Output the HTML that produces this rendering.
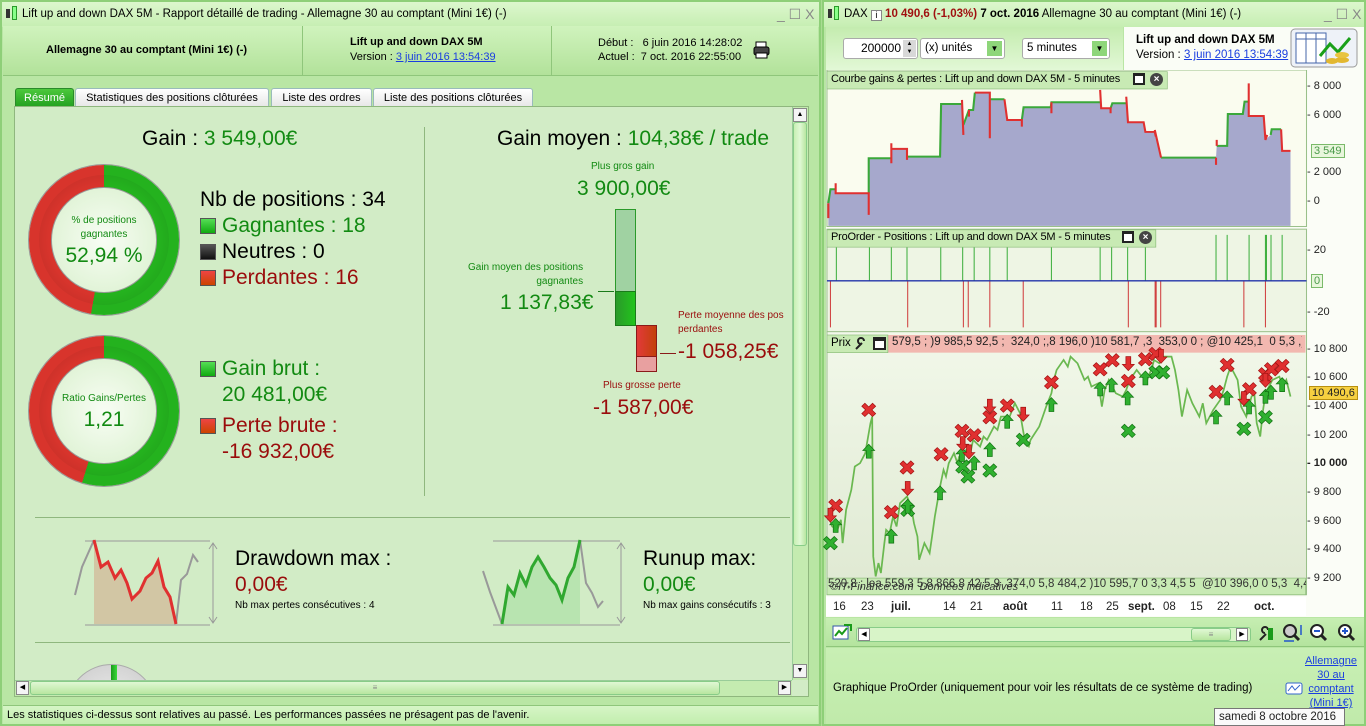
<!DOCTYPE html>
<html><head><meta charset="utf-8">
<style>
*{margin:0;padding:0;box-sizing:border-box}
body{width:1366px;height:726px;overflow:hidden;background:#a9dc92;font-family:"Liberation Sans",Arial,sans-serif;position:relative;color:#000}
.a{position:absolute}
.t{position:absolute;white-space:nowrap}
.g{color:#128a12}.r{color:#9a0c0c}
.title{background:linear-gradient(#dcf7cd,#c6eeb2);height:25px;font-size:12px;line-height:25px}
.sq{position:absolute;width:16px;height:16px;border:1px solid #555}
.ax{position:absolute;font-size:11px;color:#222;white-space:nowrap}
.tab{position:absolute;top:88px;height:19px;font-size:11px;line-height:18px;text-align:center;background:linear-gradient(#fff,#e6e6e6);border:1px solid #9bb;border-bottom:none;border-radius:3px 3px 0 0}
a{color:#1a3ee0;text-decoration:underline}
</style></head><body>

<!-- LEFT WINDOW -->
<div class="a" style="left:0;top:0;width:821px;height:726px;background:#b9e6a4;border:2px solid #8ecf78"></div>
<div class="a title" style="left:2px;top:2px;width:817px;">
 <span class="a" style="left:4px;top:7px;width:4px;height:9px;background:#333"></span>
 <span class="a" style="left:10px;top:4px;width:5px;height:14px;border:1px solid #2a9a2a;background:#8f8"></span>
 <span class="t" style="left:20px;top:0;font-size:11.5px">Lift up and down DAX 5M - Rapport détaillé de trading - Allemagne 30 au comptant (Mini 1€) (-)</span>
 <span class="t" style="left:775px;top:0;color:#888;font-size:14px">_ ☐ X</span>
</div>
<div class="a" style="left:3px;top:26px;width:815px;height:50px;background:linear-gradient(#d0f3bd,#b2e29a);border-bottom:1px solid #8fc67b"></div>
<div class="a" style="left:302px;top:26px;width:1px;height:50px;background:#8fc67b"></div>
<div class="a" style="left:551px;top:26px;width:1px;height:50px;background:#8fc67b"></div>
<div class="t" style="left:46px;top:44px;font-size:11px;font-weight:bold">Allemagne 30 au comptant (Mini 1€) (-)</div>
<div class="t" style="left:350px;top:36px;font-size:11px;font-weight:bold">Lift up and down DAX 5M</div>
<div class="t" style="left:350px;top:51px;font-size:11px">Version : <a>3 juin 2016 13:54:39</a></div>
<div class="t" style="left:598px;top:37px;font-size:11px">Début :&nbsp;&nbsp; 6 juin 2016 14:28:02</div>
<div class="t" style="left:598px;top:51px;font-size:11px">Actuel :&nbsp; 7 oct. 2016 22:55:00</div>
<svg class="a" style="left:752px;top:40px" width="20" height="20"><rect x="4" y="2" width="10" height="6" fill="#fff" stroke="#000"/><rect x="2" y="7" width="15" height="8" rx="2" fill="#444" stroke="#000"/><rect x="4" y="13" width="11" height="5" fill="#fff" stroke="#000"/></svg>

<div class="tab" style="left:15px;width:59px;background:linear-gradient(#4cc83c,#22a020);color:#fff;border-color:#2a8a2a">Résumé</div>
<div class="tab" style="left:75px;width:194px">Statistiques des positions clôturées</div>
<div class="tab" style="left:271px;width:101px">Liste des ordres</div>
<div class="tab" style="left:373px;width:160px">Liste des positions clôturées</div>

<div class="a" style="left:14px;top:106px;width:795px;height:591px;background:#d2ecc6;border:1px solid #8fb77e"></div>
<div class="a" style="left:792px;top:107px;width:16px;height:573px;background:#c4ebb0;border-left:1px solid #9c9"></div>
<div class="a" style="left:793px;top:108px;width:14px;height:14px;background:#f4f4f4;border:1px solid #888;font-size:7px;text-align:center;line-height:12px">▲</div>
<div class="a" style="left:793px;top:122px;width:14px;height:424px;background:linear-gradient(90deg,#c8f0b4,#e0f8d4,#b8e6a0);border:1px solid #8c8;border-radius:3px"></div>
<div class="a" style="left:793px;top:664px;width:14px;height:14px;background:#f4f4f4;border:1px solid #888;font-size:7px;text-align:center;line-height:12px">▼</div>
<div class="a" style="left:15px;top:680px;width:777px;height:16px;background:#c4ebb0;border-top:1px solid #9c9"></div>
<div class="a" style="left:16px;top:681px;width:13px;height:14px;background:#f4f4f4;border:1px solid #888;font-size:7px;line-height:12px;text-align:center">◀</div>
<div class="a" style="left:30px;top:681px;width:690px;height:14px;background:linear-gradient(#e0f8d4,#b8e6a0);border:1px solid #8c8;border-radius:3px;font-size:8px;text-align:center;color:#888;line-height:12px">≡</div>
<div class="a" style="left:778px;top:681px;width:13px;height:14px;background:#f4f4f4;border:1px solid #888;font-size:7px;line-height:12px;text-align:center">▶</div>
<div class="a" style="left:3px;top:705px;width:815px;height:19px;background:linear-gradient(#d6f5c6,#c2eeae);border-top:1px solid #8fc67b"></div>
<div class="t" style="left:7px;top:709px;font-size:11px">Les statistiques ci-dessus sont relatives au passé. Les performances passées ne présagent pas de l'avenir.</div>

<div class="t" style="left:142px;top:127px;font-size:21px">Gain : <span class="g">3 549,00€</span></div>
<div class="a" style="left:424px;top:127px;width:1px;height:369px;background:#8fb77e"></div>

<div class="a" style="left:29px;top:165px;width:150px;height:150px;border-radius:50%;background:conic-gradient(#24b21e 0deg 190deg,#d8342c 190deg 360deg);box-shadow:0 0 0 1px #999"></div>
<div class="a" style="left:39px;top:175px;width:130px;height:130px;border-radius:50%;background:radial-gradient(circle,transparent 60%,rgba(0,0,0,.18) 100%)"></div>
<div class="a" style="left:51px;top:187px;width:106px;height:106px;border-radius:50%;background:radial-gradient(circle,#f8fdf4,#d8f0cc);border:1px solid #999"></div>
<div class="t g" style="left:51px;top:214px;width:106px;text-align:center;font-size:10px;line-height:14px;white-space:normal">% de positions gagnantes</div>
<div class="t g" style="left:51px;top:244px;width:106px;text-align:center;font-size:21px">52,94 %</div>

<div class="a" style="left:29px;top:336px;width:150px;height:150px;border-radius:50%;background:conic-gradient(#24b21e 0deg 197deg,#d8342c 197deg 360deg);box-shadow:0 0 0 1px #999"></div>
<div class="a" style="left:39px;top:346px;width:130px;height:130px;border-radius:50%;background:radial-gradient(circle,transparent 60%,rgba(0,0,0,.18) 100%)"></div>
<div class="a" style="left:51px;top:358px;width:106px;height:106px;border-radius:50%;background:radial-gradient(circle,#f8fdf4,#d8f0cc);border:1px solid #999"></div>
<div class="t g" style="left:51px;top:393px;width:106px;text-align:center;font-size:10px">Ratio Gains/Pertes</div>
<div class="t g" style="left:51px;top:408px;width:106px;text-align:center;font-size:21px">1,21</div>

<div class="t" style="left:200px;top:188px;font-size:21px">Nb de positions : 34</div>
<div class="sq" style="left:200px;top:218px;background:linear-gradient(#5d5,#1a1)"></div><div class="t g" style="left:222px;top:214px;font-size:21px">Gagnantes : 18</div>
<div class="sq" style="left:200px;top:244px;background:linear-gradient(#555,#111)"></div><div class="t" style="left:222px;top:240px;font-size:21px">Neutres : 0</div>
<div class="sq" style="left:200px;top:270px;background:linear-gradient(#e44,#c40)"></div><div class="t r" style="left:222px;top:266px;font-size:21px">Perdantes : 16</div>

<div class="sq" style="left:200px;top:361px;background:linear-gradient(#5d5,#1a1)"></div><div class="t g" style="left:222px;top:357px;font-size:21px">Gain brut :</div>
<div class="t g" style="left:222px;top:383px;font-size:21px">20 481,00€</div>
<div class="sq" style="left:200px;top:418px;background:linear-gradient(#e44,#c40)"></div><div class="t r" style="left:222px;top:414px;font-size:21px">Perte brute :</div>
<div class="t r" style="left:222px;top:440px;font-size:21px">-16 932,00€</div>

<div class="t" style="left:497px;top:127px;font-size:21px">Gain moyen : <span class="g">104,38€ / trade</span></div>
<div class="t g" style="left:591px;top:161px;font-size:10px">Plus gros gain</div>
<div class="t g" style="left:577px;top:177px;font-size:21px">3 900,00€</div>
<div class="a" style="left:615px;top:209px;width:21px;height:83px;background:#a0d2a2;border:1px solid #2a9a2a"></div>
<div class="a" style="left:615px;top:291px;width:21px;height:35px;background:linear-gradient(90deg,#2a9a2a,#22c41c);border:1px solid #1a7a1a"></div>
<div class="a" style="left:636px;top:325px;width:21px;height:32px;background:linear-gradient(90deg,#e23a3a,#c2400a);border:1px solid #8a1a1a"></div>
<div class="a" style="left:636px;top:356px;width:21px;height:16px;background:#e8a0a0;border:1px solid #8a1a1a"></div>
<div class="t g" style="left:468px;top:261px;font-size:10px;text-align:right;line-height:14px">Gain moyen des positions<br>gagnantes</div>
<div class="a" style="left:598px;top:291px;width:16px;height:1px;background:#1a7a1a"></div>
<div class="t g" style="left:500px;top:291px;font-size:21px">1 137,83€</div>
<div class="t r" style="left:678px;top:309px;font-size:10px;line-height:14px">Perte moyenne des pos<br>perdantes</div>
<div class="a" style="left:660px;top:353px;width:16px;height:1px;background:#8a1a1a"></div>
<div class="t r" style="left:678px;top:340px;font-size:21px">-1 058,25€</div>
<div class="t r" style="left:603px;top:380px;font-size:10px">Plus grosse perte</div>
<div class="t r" style="left:593px;top:396px;font-size:21px">-1 587,00€</div>

<div class="a" style="left:35px;top:517px;width:755px;height:1px;background:#8fb77e"></div>
<div class="a" style="left:35px;top:642px;width:755px;height:1px;background:#8fb77e"></div>

<svg class="a" style="left:70px;top:535px" width="150" height="95">
 <line x1="15" y1="6" x2="140" y2="6" stroke="#999"/><line x1="15" y1="90" x2="140" y2="90" stroke="#999"/>
 <line x1="143" y1="8" x2="143" y2="88" stroke="#999"/><path d="M139 14l4-6 4 6M139 82l4 6 4-6" fill="none" stroke="#999"/>
 <path d="M24 5 L31 32 L38 27 L45 43 L51 35 L57 48 L62 64 L70 56 L76 43 L82 38 L88 26 L94 52 L100 62 L106 89 L24 89Z" fill="#d2c6a4"/>
 <path d="M5 60 L12 32 L24 5" fill="none" stroke="#999" stroke-width="2"/>
 <path d="M106 89 L111 45 L117 39 L123 20 L128 27" fill="none" stroke="#999" stroke-width="2"/>
 <path d="M24 5 L31 32 L38 27 L45 43 L51 35 L57 48 L62 64 L70 56 L76 43 L82 38 L88 26 L94 52 L100 62 L106 89" fill="none" stroke="#e03030" stroke-width="3"/>
</svg>
<div class="t" style="left:235px;top:547px;font-size:21px">Drawdown max :</div>
<div class="t r" style="left:235px;top:573px;font-size:21px">0,00€</div>
<div class="t" style="left:235px;top:600px;font-size:10px">Nb max pertes consécutives : 4</div>

<svg class="a" style="left:480px;top:535px" width="150" height="95">
 <line x1="13" y1="6" x2="140" y2="6" stroke="#999"/><line x1="13" y1="90" x2="140" y2="90" stroke="#999"/>
 <line x1="141" y1="8" x2="141" y2="88" stroke="#999"/><path d="M137 14l4-6 4 6M137 82l4 6 4-6" fill="none" stroke="#999"/>
 <path d="M22 89 L28 52 L34 60 L40 38 L46 50 L52 32 L58 22 L64 32 L70 43 L76 50 L82 65 L88 43 L94 32 L100 5 L100 89Z" fill="#b8e4b0"/>
 <path d="M3 36 L10 57 L22 89" fill="none" stroke="#999" stroke-width="2"/>
 <path d="M100 5 L106 48 L112 58 L118 72 L123 66" fill="none" stroke="#999" stroke-width="2"/>
 <path d="M22 89 L28 52 L34 60 L40 38 L46 50 L52 32 L58 22 L64 32 L70 43 L76 50 L82 65 L88 43 L94 32 L100 5" fill="none" stroke="#30a830" stroke-width="3"/>
</svg>
<div class="t" style="left:643px;top:547px;font-size:21px">Runup max:</div>
<div class="t g" style="left:643px;top:573px;font-size:21px">0,00€</div>
<div class="t" style="left:643px;top:600px;font-size:10px">Nb max gains consécutifs : 3</div>

<div class="a" style="left:66px;top:664px;width:91px;height:16px;overflow:hidden"><div style="width:91px;height:91px;border-radius:50%;background:radial-gradient(circle,#f0f0f0,#c8c8c8);border:1px solid #aaa"></div></div>
<div class="a" style="left:111px;top:665px;width:6px;height:15px;background:linear-gradient(90deg,#1a9a1a,#3ada3a)"></div>

<!-- RIGHT WINDOW -->
<div class="a" style="left:822px;top:0;width:544px;height:726px;background:#b9e6a4;border:2px solid #8ecf78"></div>
<div class="a title" style="left:824px;top:2px;width:540px;">
 <span class="a" style="left:4px;top:7px;width:4px;height:9px;background:#333"></span>
 <span class="a" style="left:10px;top:4px;width:5px;height:14px;border:1px solid #2a9a2a;background:#8f8"></span>
 <span class="t" style="left:20px;top:0;font-size:11.5px">DAX <span style="display:inline-block;width:11px;height:11px;border:1px solid #888;background:#fff;font-size:9px;line-height:9px;text-align:center;vertical-align:-1px">i</span> <b style="color:#a01010">10 490,6 (-1,03%)</b> <b>7 oct. 2016</b> Allemagne 30 au comptant (Mini 1€) (-)</span>
 <span class="t" style="left:500px;top:0;color:#888;font-size:14px">_ ☐ X</span>
</div>
<div class="a" style="left:826px;top:27px;width:297px;height:43px;background:linear-gradient(#c4ecaf,#e2f8d6)"></div>
<div class="a" style="left:1124px;top:27px;width:240px;height:43px;background:#fafdf6"></div>
<div class="a" style="left:843px;top:38px;width:75px;height:21px;background:#fff;border:1px solid #aaa;border-radius:3px;font-size:12px;line-height:19px;text-align:right;padding-right:16px">200000</div>
<div class="a" style="left:903px;top:40px;width:13px;height:17px;background:#d8d8d8;font-size:6px;line-height:8px;text-align:center">▲<br>▼</div>
<div class="a" style="left:920px;top:38px;width:85px;height:21px;background:#fff;border:1px solid #aaa;border-radius:3px;font-size:11.5px;line-height:19px;padding-left:4px">(x) unités</div>
<div class="a" style="left:987px;top:41px;width:15px;height:15px;background:#8ed67a;font-size:8px;line-height:15px;text-align:center">▼</div>
<div class="a" style="left:1022px;top:38px;width:88px;height:21px;background:#fff;border:1px solid #aaa;border-radius:3px;font-size:11.5px;line-height:19px;padding-left:4px">5 minutes</div>
<div class="a" style="left:1092px;top:41px;width:15px;height:15px;background:#8ed67a;font-size:8px;line-height:15px;text-align:center">▼</div>
<div class="t" style="left:1136px;top:34px;font-size:11.5px;font-weight:bold">Lift up and down DAX 5M</div>
<div class="t" style="left:1136px;top:49px;font-size:11.5px">Version : <a>3 juin 2016 13:54:39</a></div>
<svg class="a" style="left:1290px;top:28px" width="68" height="40"><rect x="1" y="1" width="66" height="38" rx="4" fill="#eef2f8" stroke="#999"/><rect x="6" y="5" width="30" height="30" fill="#fff" stroke="#4466aa"/><path d="M6 11h30M16 5v30M26 5v30" stroke="#4466aa"/><path d="M30 28l10-12 8 8 12-14" fill="none" stroke="#1aa01a" stroke-width="3"/><ellipse cx="52" cy="32" rx="7" ry="3" fill="#e2b830"/><ellipse cx="52" cy="27" rx="7" ry="3" fill="#e8c440"/><ellipse cx="42" cy="33" rx="6" ry="3" fill="#e2b830"/></svg>

<div class="a" style="left:826px;top:70px;width:538px;height:547px;background:#fbfdf7"></div>
<svg class="a" style="left:820px;top:70px" width="546" height="550">
 <g transform="scale(0.348,0.333)">
  <rect x="20" y="0" width="1378" height="470" fill="#fafcef" stroke="#9ac08a" stroke-width="3"/>
  <path d="M24 400 L30 358 L45 358 L45 370 L140 370 L140 265 L205 265 L205 237 L250 237 L250 260 L345 260 L348 102 L408 102 L412 165 L428 120 L440 120 L445 68 L488 68 L490 88 L530 88 L538 150 L580 150 L585 112 L663 112 L665 97 L805 97 L808 115 L835 115 L840 100 L880 100 L885 157 L930 157 L935 186 L962 186 L980 263 L1138 263 L1140 228 L1170 228 L1172 132 L1215 132 L1220 95 L1230 95 L1232 40 L1232 138 L1275 138 L1280 210 L1295 195 L1298 178 L1325 178 L1328 243 L1352 243 L1352 468 L24 468Z" fill="#a6a8cc"/>
  <path d="M24 400 L30 358 L45 358 M140 370 L140 265 L205 265 M250 260 L345 260 L348 102 L408 102 M412 165 L428 120 L440 120 L445 68 M490 88 L530 88 M580 150 L585 112 L663 112 L665 97 L805 97 M835 115 L840 100 L880 100 M980 263 L1138 263 M1140 228 L1170 228 L1172 132 L1215 132 L1220 95 L1230 95 M1295 195 L1298 178 L1325 178" fill="none" stroke="#3aa83a" stroke-width="6"/>
  <path d="M24 400 L24 445 M45 340 L45 370 L140 370 L140 435 M205 220 L205 280 M205 237 L250 237 L250 270 M408 90 L412 195 M428 120 L428 140 M445 68 L488 68 L488 205 M530 88 L538 150 L580 150 L580 170 M665 97 L665 130 M805 60 L808 115 L835 115 L835 130 M880 80 L885 157 L930 157 L935 186 L962 186 L965 200 M962 180 L980 263 M1138 263 L1138 285 M1140 210 L1140 228 M1232 40 L1232 138 L1275 138 L1280 210 L1285 195 M1325 178 L1328 243 L1352 243" fill="none" stroke="#e03030" stroke-width="6"/>
  <rect x="20" y="5" width="978" height="52" fill="#c8eab4" stroke="#8cbc7a" stroke-width="2"/>
  <rect x="20" y="478" width="1378" height="310" fill="#eef5e4" stroke="#9ac08a" stroke-width="3"/>
  <rect x="20" y="480" width="945" height="52" fill="#c8eab4" stroke="#8cbc7a" stroke-width="2"/>
  <path d="M47 533v100M142 533v100M205 533v100M250 533v100M347 533v100M410 533v100M443 533v100M488 533v100M538 533v100M665 533v100M805 533v100M838 533v100M884 533v100M935 533v100M1138 495v138M1170 495v138M1233 495v138M1280 495v138M1283 495v138M1296 495v138M1328 495v138" stroke="#40b040" stroke-width="3"/>
  <path d="M30 633v140M252 633v140M412 633v140M426 633v140M488 633v140M584 633v140M886 633v140M963 633v140M966 633v140M979 633v140M1218 633v140M1280 633v140" stroke="#d04040" stroke-width="3"/>
  <line x1="20" y1="633" x2="1398" y2="633" stroke="#2233aa" stroke-width="4"/>
 </g>
</svg>
<div class="t" style="left:831px;top:73px;font-size:11px;letter-spacing:-0.2px">Courbe gains &amp; pertes : Lift up and down DAX 5M - 5 minutes</div>
<div class="a" style="left:1133px;top:73px;width:12px;height:12px;border:2px solid #222;border-top-width:3px;background:#fff"></div>
<div class="a" style="left:1150px;top:73px;width:13px;height:13px;border-radius:50%;background:#444;color:#fff;font-size:10px;line-height:13px;text-align:center;font-weight:bold">×</div>
<div class="t" style="left:831px;top:231px;font-size:11px;letter-spacing:-0.2px">ProOrder - Positions : Lift up and down DAX 5M - 5 minutes</div>
<div class="a" style="left:1122px;top:231px;width:12px;height:12px;border:2px solid #222;border-top-width:3px;background:#fff"></div>
<div class="a" style="left:1139px;top:231px;width:13px;height:13px;border-radius:50%;background:#444;color:#fff;font-size:10px;line-height:13px;text-align:center;font-weight:bold">×</div>

<div class="ax" style="left:1307px;top:80px">- 8 000</div>
<div class="ax" style="left:1307px;top:109px">- 6 000</div>
<div class="ax" style="left:1307px;top:166px">- 2 000</div>
<div class="ax" style="left:1307px;top:195px">- 0</div>
<div class="ax" style="left:1311px;top:144px;background:#e8f6dc;border:1px solid #7aba6a;color:#4a9a4a;padding:0 2px">3 549</div>
<div class="ax" style="left:1307px;top:244px">- 20</div>
<div class="ax" style="left:1311px;top:274px;background:#e8f6dc;border:1px solid #7aba6a;color:#4a9a4a;padding:0 2px">0</div>
<div class="ax" style="left:1307px;top:306px">- -20</div>

<svg class="a" style="left:820px;top:330px" width="546" height="290">
 <defs>
  <linearGradient id="pg" x1="0" y1="0" x2="0" y2="1"><stop offset="0" stop-color="#f2f8ea"/><stop offset="1" stop-color="#dfe9d2"/></linearGradient>
  <path id="rx" d="M-20 -11 L-11 -20 L0 -9 L11 -20 L20 -11 L9 0 L20 11 L11 20 L0 9 L-11 20 L-20 11 L-9 0Z"/>
  <path id="up" d="M0 -22 L17 -3 L7 -3 L7 20 L-7 20 L-7 -3 L-17 -3Z"/>
 </defs>
 <g transform="scale(0.348,0.333)">
  <rect x="20" y="5" width="1378" height="790" fill="url(#pg)" stroke="#9ac08a" stroke-width="3"/>
  <rect x="195" y="15" width="1200" height="53" fill="#f2b8b0"/>
  <rect x="20" y="15" width="175" height="53" fill="#c8eab4" stroke="#8cbc7a" stroke-width="2"/>
  <rect x="20" y="745" width="1375" height="50" fill="#c8eab4" stroke="#8cbc7a" stroke-width="2"/>
  <polyline points="25,560 35,590 50,600 60,570 65,640 75,540 90,480 100,410 115,400 130,370 145,280 150,260 153,680 160,740 168,700 175,730 185,640 190,600 200,610 210,560 220,590 230,520 250,500 262,530 270,580 280,620 285,690 300,640 315,670 322,620 330,560 345,470 355,420 362,440 370,400 385,370 395,400 400,380 420,360 430,380 440,330 460,350 470,320 480,330 500,290 510,300 520,260 545,260 560,220 575,250 590,340 600,350 605,330 630,290 640,260 650,230 665,190 672,150 680,120 700,90 712,110 720,80 740,100 760,150 770,140 780,170 800,160 810,230 818,180 830,150 850,190 870,200 880,180 890,150 910,120 925,140 940,150 955,110 960,90 975,100 990,80 1010,80 1020,120 1030,180 1040,260 1055,180 1070,220 1080,240 1090,260 1100,220 1110,280 1130,240 1150,210 1160,180 1170,140 1180,110 1190,130 1200,150 1210,230 1225,260 1240,200 1248,190 1255,280 1265,320 1272,250 1280,190 1300,150 1320,140 1330,170 1340,150 1352,200" fill="none" stroke="#6ab850" stroke-width="5"/>
  <g fill="#e03030" stroke="#a01010" stroke-width="2">
   <use href="#rx" x="45" y="528"/><use href="#rx" x="140" y="240"/><use href="#rx" x="250" y="413"/><use href="#rx" x="205" y="547"/><use href="#rx" x="348" y="373"/><use href="#rx" x="408" y="303"/><use href="#rx" x="443" y="316"/><use href="#rx" x="488" y="262"/><use href="#rx" x="538" y="227"/><use href="#rx" x="665" y="157"/><use href="#rx" x="805" y="118"/><use href="#rx" x="840" y="91"/><use href="#rx" x="886" y="153"/><use href="#rx" x="935" y="88"/><use href="#rx" x="965" y="72"/><use href="#rx" x="1170" y="105"/><use href="#rx" x="1138" y="186"/><use href="#rx" x="1234" y="178"/><use href="#rx" x="1280" y="133"/><use href="#rx" x="1297" y="118"/><use href="#rx" x="1328" y="108"/>
  </g>
  <g fill="#30b030" stroke="#107010" stroke-width="2">
   <use href="#rx" x="30" y="640"/><use href="#rx" x="252" y="540"/><use href="#rx" x="410" y="410"/><use href="#rx" x="425" y="440"/><use href="#rx" x="488" y="422"/><use href="#rx" x="584" y="330"/><use href="#rx" x="886" y="303"/><use href="#rx" x="965" y="127"/><use href="#rx" x="985" y="127"/><use href="#rx" x="1218" y="297"/><use href="#rx" x="1280" y="262"/>
   <use href="#up" x="45" y="588"/><use href="#up" x="140" y="365"/><use href="#up" x="205" y="620"/><use href="#up" x="252" y="530"/><use href="#up" x="345" y="490"/><use href="#up" x="408" y="375"/><use href="#up" x="443" y="400"/><use href="#up" x="488" y="360"/><use href="#up" x="538" y="275"/><use href="#up" x="665" y="225"/><use href="#up" x="805" y="178"/><use href="#up" x="838" y="166"/><use href="#up" x="884" y="205"/><use href="#up" x="935" y="145"/><use href="#up" x="1138" y="262"/><use href="#up" x="1170" y="205"/><use href="#up" x="1233" y="232"/><use href="#up" x="1280" y="200"/><use href="#up" x="1296" y="188"/><use href="#up" x="1328" y="165"/>
  </g>
  <g fill="#e03030" stroke="#a01010" stroke-width="2">
   <use href="#up" transform="translate(30,555) rotate(180)"/><use href="#up" transform="translate(252,475) rotate(180)"/><use href="#up" transform="translate(410,340) rotate(180)"/><use href="#up" transform="translate(428,365) rotate(180)"/><use href="#up" transform="translate(488,228) rotate(180)"/><use href="#up" transform="translate(584,252) rotate(180)"/><use href="#up" transform="translate(886,100) rotate(180)"/><use href="#up" transform="translate(980,78) rotate(180)"/><use href="#up" transform="translate(1218,205) rotate(180)"/><use href="#up" transform="translate(1280,150) rotate(180)"/>
  </g>
 </g>
</svg>
<div class="t" style="left:831px;top:337px;font-size:11.5px">Prix</div>
<svg class="a" style="left:854px;top:337px" width="34" height="14"><path d="M2 12l6-6M7 7a3 3 0 1 1 3-3" fill="none" stroke="#222" stroke-width="2"/><rect x="20" y="1" width="11" height="11" fill="#fff" stroke="#222" stroke-width="2"/><rect x="20" y="1" width="11" height="3" fill="#222"/></svg>
<div class="a" style="left:892px;top:336px;width:410px;height:16px;overflow:hidden;font-size:11.5px;color:#222;white-space:nowrap">579,5 ; )9 985,5 92,5 ; &nbsp;324,0 ;,8 196,0 )10 581,7 ,3 &nbsp;353,0 0 ; @10 425,1 &nbsp;0 5,3 ,),1</div>
<div class="a" style="left:828px;top:578px;width:478px;height:16px;overflow:hidden;font-size:11.5px;color:#333;white-space:nowrap">520,8 ; lea 559,3 5,8 866,8 42,5 9 &nbsp;374,0 5,8 484,2 )10 595,7 0 3,3 4,5 5 &nbsp;@10 396,0 0 5,3 &nbsp;4,4</div>
<div class="t" style="left:830px;top:581px;font-size:11px;color:#333;font-style:italic">©IT-Finance.com&nbsp; Données indicatives</div>
<div class="ax" style="left:1307px;top:343px">- 10 800</div>
<div class="ax" style="left:1307px;top:371px">- 10 600</div>
<div class="ax" style="left:1307px;top:400px">- 10 400</div>
<div class="ax" style="left:1307px;top:429px">- 10 200</div>
<div class="ax" style="left:1307px;top:457px;font-weight:bold">- 10 000</div>
<div class="ax" style="left:1307px;top:486px">- 9 800</div>
<div class="ax" style="left:1307px;top:515px">- 9 600</div>
<div class="ax" style="left:1307px;top:543px">- 9 400</div>
<div class="ax" style="left:1307px;top:572px">- 9 200</div>
<div class="ax" style="left:1309px;top:386px;background:#f6d040;border:1px solid #b89010;padding:0 2px">10 490,6</div>
<div class="a" style="left:826px;top:597px;width:480px;height:19px;background:#fff"></div>
<div class="ax" style="left:833px;top:601px;font-size:11.5px">16</div>
<div class="ax" style="left:861px;top:601px;font-size:11.5px">23</div>
<div class="ax" style="left:891px;top:601px;font-size:11.5px;font-weight:bold">juil.</div>
<div class="ax" style="left:943px;top:601px;font-size:11.5px">14</div>
<div class="ax" style="left:970px;top:601px;font-size:11.5px">21</div>
<div class="ax" style="left:1003px;top:601px;font-size:11.5px;font-weight:bold">août</div>
<div class="ax" style="left:1051px;top:601px;font-size:11.5px">11</div>
<div class="ax" style="left:1080px;top:601px;font-size:11.5px">18</div>
<div class="ax" style="left:1106px;top:601px;font-size:11.5px">25</div>
<div class="ax" style="left:1128px;top:601px;font-size:11.5px;font-weight:bold">sept.</div>
<div class="ax" style="left:1163px;top:601px;font-size:11.5px">08</div>
<div class="ax" style="left:1190px;top:601px;font-size:11.5px">15</div>
<div class="ax" style="left:1217px;top:601px;font-size:11.5px">22</div>
<div class="ax" style="left:1254px;top:601px;font-size:11.5px;font-weight:bold">oct.</div>

<div class="a" style="left:826px;top:618px;width:538px;height:29px;background:linear-gradient(#c6eeb2,#b4e49e);border-bottom:1px solid #8fc67b"></div>
<svg class="a" style="left:832px;top:623px" width="22" height="20"><rect x="1" y="3" width="15" height="13" fill="#fff" stroke="#3355aa"/><path d="M3 13l4-5 3 3 5-6" stroke="#1a9a1a" stroke-width="2" fill="none"/><path d="M12 2h7v6" stroke="#1a9a1a" stroke-width="2" fill="none"/></svg>
<div class="a" style="left:856px;top:627px;width:395px;height:15px;background:#d8f4c8;border:1px solid #8c8;border-radius:3px"></div>
<div class="a" style="left:858px;top:628px;width:12px;height:13px;background:#fff;border:1px solid #888;font-size:7px;line-height:11px;text-align:center">◀</div>
<div class="a" style="left:1191px;top:628px;width:40px;height:13px;background:linear-gradient(#e0f8d4,#b8e6a0);border:1px solid #8c8;border-radius:3px;font-size:8px;text-align:center;color:#888;line-height:11px">≡</div>
<div class="a" style="left:1236px;top:628px;width:12px;height:13px;background:#fff;border:1px solid #888;font-size:7px;line-height:11px;text-align:center">▶</div>
<svg class="a" style="left:1256px;top:622px" width="108" height="22"><path d="M4 18l6-6M9 11a3 3 0 1 1 3-3" stroke="#222" stroke-width="2" fill="none"/><rect x="12" y="6" width="5" height="12" fill="#1a9a1a"/><circle cx="34" cy="9" r="6" fill="#ccc" stroke="#222" stroke-width="2"/><path d="M38 13l5 5" stroke="#222" stroke-width="3"/><path d="M28 19h10M45 3v10" stroke="#2255cc" stroke-width="1.5"/><circle cx="61" cy="9" r="6" fill="#fff" stroke="#222" stroke-width="2"/><path d="M65 13l5 5" stroke="#222" stroke-width="3"/><path d="M58 9h6" stroke="#2255cc" stroke-width="2"/><circle cx="89" cy="9" r="6" fill="#fff" stroke="#222" stroke-width="2"/><path d="M93 13l5 5" stroke="#222" stroke-width="3"/><path d="M86 9h6M89 6v6" stroke="#2255cc" stroke-width="2"/></svg>

<div class="a" style="left:826px;top:648px;width:538px;height:76px;background:linear-gradient(#c8efb4,#c0eaaa)"></div>
<div class="t" style="left:833px;top:682px;font-size:11.5px">Graphique ProOrder (uniquement pour voir les résultats de ce système de trading)</div>
<svg class="a" style="left:1285px;top:682px" width="18" height="13"><rect x="1" y="1" width="16" height="11" rx="2" fill="#fff" stroke="#3366cc"/><path d="M3 9l4-5 3 4 5-5" stroke="#3366cc" fill="none"/></svg>
<div class="a" style="left:1303px;top:654px;width:56px;font-size:11px;line-height:14px;text-align:center"><a>Allemagne 30 au comptant (Mini 1€)</a></div>
<div class="a" style="left:1214px;top:708px;width:131px;height:18px;background:#fafafa;border:1px solid #777;font-size:11.5px;line-height:16px;padding-left:4px;color:#222">samedi 8 octobre 2016</div>
</body></html>
